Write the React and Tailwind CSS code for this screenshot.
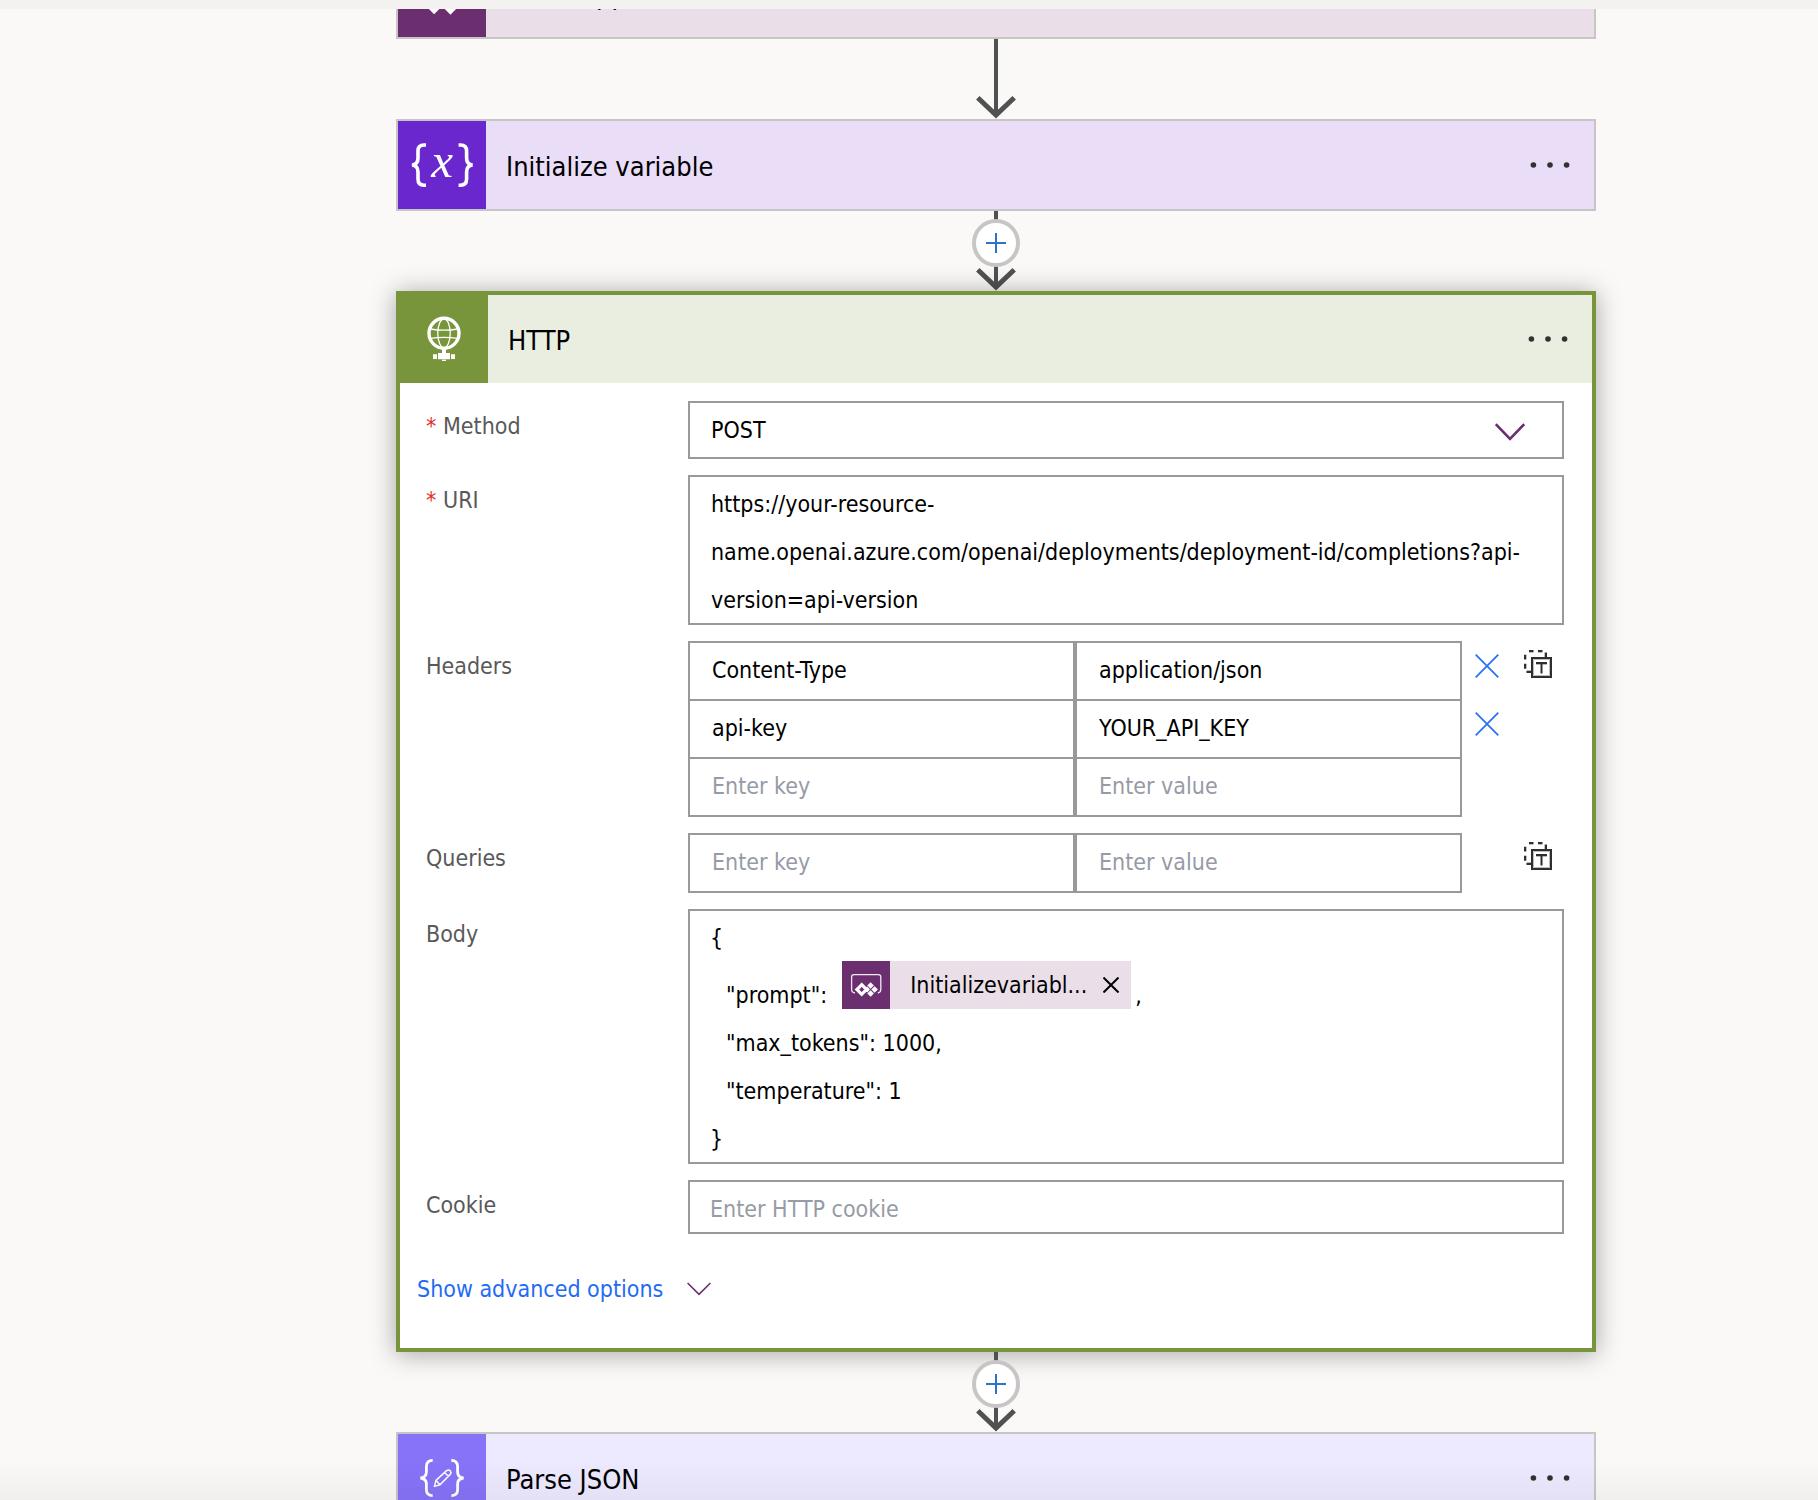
import { useState } from "react";

function PowerAppsIcon({ className }) {
  return (
    <svg viewBox="0 0 48 48" className={className} fill="none" aria-hidden="true">
      <path d="M13 32 q-3.4 -0.4 -3.4 -3.4 V16 q0 -2.4 2.4 -2.4 h24.4 q2.4 0 2.4 2.4 v12.6 q0 3 -3 3.4" stroke="#f3e9f3" strokeWidth="1.3" />
      <path d="M19.7 23.7 l4.8 4.8 l-4.8 4.8 l-4.8 -4.8 z" stroke="#fff" strokeWidth="3.2" />
      <path
        fill="#fff"
        d="M28.6 21.2 l3.3 3.3 l-3.3 3.3 l-3.3 -3.3 z M28.6 29.2 l3.3 3.3 l-3.3 3.3 l-3.3 -3.3 z M32.6 25.2 l3.3 3.3 l-3.3 3.3 l-3.3 -3.3 z M25.2 25.6 l2.8 2.9 l-2.8 2.9 l-2.8 -2.9 z"
      />
    </svg>
  );
}

function VariableIcon({ className }) {
  return (
    <svg viewBox="0 0 88 88" className={className} fill="none" aria-hidden="true">
      <g stroke="#fff" strokeWidth="3.6">
        <path d="M28 24 H26 Q20 24 20 30 V37 Q20 43.5 14 44 Q20 44.5 20 51 V58 Q20 64.2 26 64.2 H28" />
        <path d="M60.6 24 H62.6 Q68.6 24 68.6 30 V37 Q68.6 43.5 74.6 44 Q68.6 44.5 68.6 51 V58 Q68.6 64.2 62.6 64.2 H60.6" />
      </g>
      <text x="44" y="56" textAnchor="middle" fill="#fff" fontFamily="'Liberation Serif', serif" fontStyle="italic" fontSize="49">
        x
      </text>
    </svg>
  );
}

function HttpIcon({ className }) {
  return (
    <svg viewBox="0 0 88 88" className={className} fill="none" aria-hidden="true">
      <circle cx="44" cy="38.3" r="15" stroke="#fff" strokeWidth="3.4" />
      <g stroke="#fff" strokeWidth="1.3">
        <ellipse cx="44" cy="38.3" rx="6.2" ry="14.5" />
        <path d="M30.5 34 Q44 36.4 57.5 34 M30.5 43.4 Q44 41.4 57.5 43.4" />
      </g>
      <path fill="#fff" d="M42 53 h4 v5 h-4 z M38 58 h12 v6.2 h-12 z M33 59.3 h4 v4.6 h-4 z M51 59.3 h4 v4.6 h-4 z M42 64.8 h4 v1.3 h-4 z" />
    </svg>
  );
}

function ParseIcon({ className }) {
  return (
    <svg viewBox="0 0 88 88" className={className} fill="none" stroke="#fff" aria-hidden="true">
      <path strokeWidth="2.8" d="M34.7 26.4 Q28.4 26.4 28.4 32.5 V38 Q28.4 43.4 22.4 44 Q28.4 44.6 28.4 50 V55.5 Q28.4 61.6 34.7 61.6" />
      <path strokeWidth="2.8" d="M53.3 26.4 Q59.6 26.4 59.6 32.5 V38 Q59.6 43.4 65.6 44 Q59.6 44.6 59.6 50 V55.5 Q59.6 61.6 53.3 61.6" />
      <path strokeWidth="1.5" strokeLinejoin="round" d="M36.4 52.4 l1.6 -6 l10.6 -9.8 q2 -1.3 3.6 0.2 q1.4 1.8 0 3.6 l-10.2 10.4 z M38 46.4 l4 4.4 M46.6 38.4 l3.9 4" />
    </svg>
  );
}

function DynamicTextIcon() {
  return (
    <svg viewBox="0 0 28 28" className="size-7" fill="none" stroke="#2f2f2f" strokeWidth="2" aria-hidden="true">
      <path stroke="#bdbdbd" strokeWidth="1" d="M5 2.5 H9.5 M14 2.5 H18.5 M2.5 4.7 V9.5 M2.5 13.7 V18.7 M2.5 20.5 H7 M20.5 2.5 V7 M9.5 9.5 H25.5 V25.5 H9.5 Z M12 14.5 H23" />
      <path d="M5 1 H9.5 M14 1 H18.5 M22 2.5 V7 M1 4.7 V9.5 M1 13.7 V18.7 M2.5 22 H7" />
      <path d="M8 8 H27 V27 H8 Z" />
      <path d="M12 13 H23 M17.5 13 V23.5" />
    </svg>
  );
}

function MenuButton({ label }) {
  return (
    <button type="button" aria-label={label} className="mr-4 flex h-12 w-14 items-center justify-center">
      <svg viewBox="0 0 40 8" className="h-2 w-10" fill="#323130" aria-hidden="true">
        <circle cx="3.4" cy="4" r="2.8" />
        <circle cx="20" cy="4" r="2.8" />
        <circle cx="36.6" cy="4" r="2.8" />
      </svg>
    </button>
  );
}

function CardHeader({ title, Icon, tile, tone }) {
  return (
    <header className={`flex h-[88px] items-center ${tone}`}>
      <div className={`size-[88px] shrink-0 ${tile}`}>
        <Icon className="size-full" />
      </div>
      <h2 className="flex-1 pt-1 pl-5 text-[27px] leading-9">{title}</h2>
      <MenuButton label={`Menu for ${title}`} />
    </header>
  );
}

function ActionCard(props) {
  return (
    <section className="w-full border-2 border-[#c8c6c4]">
      <CardHeader {...props} />
    </section>
  );
}

function Connector({ insertable }) {
  return (
    <div className="relative flex h-20 w-12 shrink-0 justify-center pt-2">
      <svg viewBox="0 0 48 80" className="absolute inset-0 h-20 w-12" fill="none" stroke="#505252" aria-hidden="true">
        <path strokeWidth="4" d="M24 0 V76" />
        <path strokeWidth="5" d="M5.8 58.8 L24 76 L42.2 58.8" />
      </svg>
      {insertable && (
        <button
          type="button"
          aria-label="Insert a new step"
          className="relative flex size-12 items-center justify-center rounded-full border-4 border-[#c8c6c4] bg-white"
        >
          <svg viewBox="0 0 20 20" className="size-5" stroke="#2b72cc" strokeWidth="2" aria-hidden="true">
            <path d="M10 0 V20 M0 10 H20" />
          </svg>
        </button>
      )}
    </div>
  );
}

function Field({ label, htmlFor, required, children }) {
  return (
    <div className="flex">
      <label htmlFor={htmlFor} className="flex w-[262px] shrink-0 leading-[50px] text-[#595959]">
        {required && <span className="w-[17px] text-[#e0302d]">*</span>}
        {label}
      </label>
      <div className="flex min-w-0 flex-1">{children}</div>
    </div>
  );
}

const INPUT = "h-14 w-1/2 min-w-0 px-[22px] pb-0.5 outline-none placeholder:text-[#969ba6]";

function KeyValueEditor({ id, name, entries }) {
  const rows = [...entries, ["", ""]];
  return (
    <>
      <div className="min-w-0 flex-1 divide-y-2 divide-[#999] border-2 border-[#999]">
        {rows.map(([key, value], i) => (
          <div key={i} className="flex">
            <input
              id={i === 0 ? id : undefined}
              aria-label={`${name} key ${i + 1}`}
              defaultValue={key}
              placeholder="Enter key"
              className={`${INPUT} border-r-2 border-[#999]`}
            />
            <input
              aria-label={`${name} value ${i + 1}`}
              defaultValue={value}
              placeholder="Enter value"
              className={`${INPUT} border-l-2 border-[#999]`}
            />
          </div>
        ))}
      </div>
      <div className="flex w-[102px] shrink-0 justify-between pr-3 pl-[13px]">
        <div className="flex w-6 flex-col gap-2">
          {entries.map(([key]) => (
            <button key={key} type="button" aria-label={`Delete ${key}`} className="flex h-[50px] items-center">
              <svg viewBox="0 0 24 24" className="size-6" stroke="#2a72f6" strokeWidth="1.8" aria-hidden="true">
                <path d="M0.7 0.7 L23.3 23.3 M23.3 0.7 L0.7 23.3" />
              </svg>
            </button>
          ))}
        </div>
        <button type="button" aria-label={`Switch ${name} to text mode`} className="flex h-[46px] items-center">
          <DynamicTextIcon />
        </button>
      </div>
    </>
  );
}

function Token({ children }) {
  return (
    <span className="flex h-12 w-[289px] items-center bg-[#eadfe9]">
      <span className="size-12 shrink-0 bg-[#6b2e6f]">
        <PowerAppsIcon className="size-full" />
      </span>
      <span className="flex-1 pl-5 leading-[48px]">{children}</span>
      <button type="button" aria-label="Remove token" className="mr-3 flex size-4 items-center justify-center">
        <svg viewBox="0 0 16 16" className="size-4" stroke="#000" strokeWidth="2" aria-hidden="true">
          <path d="M0.5 0.5 L15.5 15.5 M15.5 0.5 L0.5 15.5" />
        </svg>
      </button>
    </span>
  );
}

const URI = [
  "https://your-resource-",
  "name.openai.azure.com/openai/deployments/deployment-id/completions?api-",
  "version=api-version",
].join("\n");

function HttpCard() {
  const [method, setMethod] = useState("POST");
  return (
    <section className="relative w-full border-4 border-[#78953c] bg-white shadow-[0_2px_24px_rgba(0,0,0,0.34)]">
      <CardHeader title="HTTP" Icon={HttpIcon} tile="bg-[#78953c]" tone="bg-[#eaeee0]" />
      <form className="flex flex-col gap-4 pt-[18px] pr-7 pl-[26px]">
        <Field label="Method" htmlFor="method" required>
          <div className="relative w-full">
            <select
              id="method"
              value={method}
              onChange={(e) => setMethod(e.target.value)}
              className="h-[58px] w-full appearance-none border-2 border-[#999] bg-white px-[21px]"
            >
              <option>GET</option>
              <option>POST</option>
              <option>PUT</option>
              <option>PATCH</option>
              <option>DELETE</option>
            </select>
            <svg viewBox="0 0 30 18" className="pointer-events-none absolute top-[22px] right-[39px] h-[18px] w-[30px]" fill="none" stroke="#6b2e6f" strokeWidth="2.6" aria-hidden="true">
              <path d="M0.8 1.2 L15 15.8 L29.2 1.2" />
            </svg>
          </div>
        </Field>
        <Field label="URI" htmlFor="uri" required>
          <textarea
            id="uri"
            rows={3}
            defaultValue={URI}
            className="block h-[150px] w-full resize-none overflow-hidden border-2 border-[#999] pt-[3px] pr-3 pl-[21px] leading-[48px] outline-none"
          />
        </Field>
        <Field label="Headers" htmlFor="headers">
          <KeyValueEditor
            id="headers"
            name="Headers"
            entries={[
              ["Content-Type", "application/json"],
              ["api-key", "YOUR_API_KEY"],
            ]}
          />
        </Field>
        <Field label="Queries" htmlFor="queries">
          <KeyValueEditor id="queries" name="Queries" entries={[]} />
        </Field>
        <Field label="Body">
          <div role="textbox" aria-label="Body" aria-multiline="true" className="h-[255px] w-full border-2 border-[#999] px-5 pt-[3px] leading-[48px]">
            <div>{"{"}</div>
            <div className="flex h-[57px] items-end pl-4">
              <span>"prompt":</span>
              <span className="mb-2.5 pl-[15px]">
                <Token>Initializevariabl...</Token>
              </span>
              <span className="pl-1">,</span>
            </div>
            <div className="pl-4">"max_tokens": 1000,</div>
            <div className="pl-4">"temperature": 1</div>
            <div>{"}"}</div>
          </div>
        </Field>
        <Field label="Cookie" htmlFor="cookie">
          <input
            id="cookie"
            placeholder="Enter HTTP cookie"
            className="h-[54px] w-full border-2 border-[#999] px-5 pt-1 outline-none placeholder:text-[#969ba6]"
          />
        </Field>
      </form>
      <button type="button" className="mt-[31px] mb-[35px] ml-[17px] flex h-12 items-center gap-6 text-[#1f6bf5]">
        Show advanced options
        <svg viewBox="0 0 24 14" className="h-3.5 w-6" fill="none" stroke="#6b2e6f" strokeWidth="1.6" aria-hidden="true">
          <path d="M0.6 1 L12 12.4 L23.4 1" />
        </svg>
      </button>
    </section>
  );
}

export default function App() {
  return (
    <div className="relative flex h-screen flex-col overflow-hidden bg-[#faf9f8] font-['DejaVu_Sans_Condensed','DejaVu_Sans',sans-serif] text-[23px] text-black">
      <div className="h-[9px] shrink-0 bg-[#f3f2f1]" />
      <main className="min-h-0 flex-1 overflow-hidden pl-[174px]">
        <div className="mx-auto -mt-[62px] flex max-w-[1200px] flex-col items-center">
          <ActionCard title="PowerApps" Icon={PowerAppsIcon} tile="bg-[#6b2e6f]" tone="bg-[#eadfe9]" />
          <Connector />
          <ActionCard title="Initialize variable" Icon={VariableIcon} tile="bg-[#6a27cd]" tone="bg-[#eaddf7]" />
          <Connector insertable />
          <HttpCard />
          <Connector insertable />
          <ActionCard title="Parse JSON" Icon={ParseIcon} tile="bg-[#8673f8]" tone="bg-[#ede9ff]" />
        </div>
      </main>
      <div className="pointer-events-none absolute inset-x-0 bottom-0 h-10 bg-linear-to-t from-black/4 to-transparent" />
    </div>
  );
}
